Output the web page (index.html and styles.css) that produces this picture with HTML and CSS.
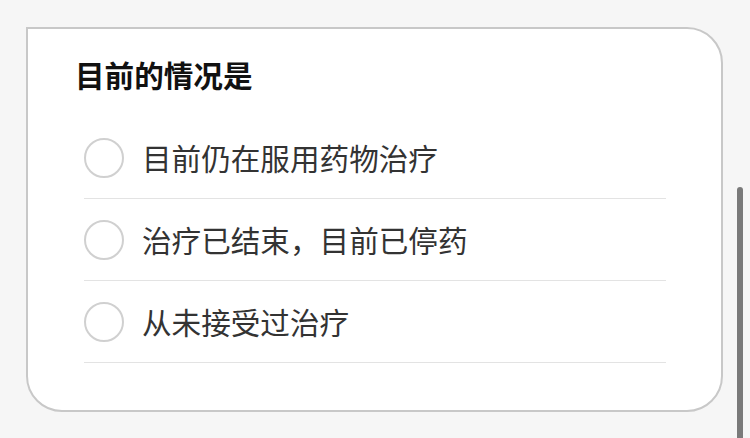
FILE: index.html
```html
<!DOCTYPE html>
<html lang="zh-CN">
<head>
<meta charset="utf-8">
<link rel="stylesheet" href="styles.css">
</head>
<body>
<div class="page">
  <section class="card">
    <h2 class="title">目前的情况是</h2>
    <ul class="options">
      <li class="option"><span class="radio"></span><span class="label">目前仍在服用药物治疗</span></li>
      <li class="option"><span class="radio"></span><span class="label">治疗已结束，目前已停药</span></li>
      <li class="option"><span class="radio"></span><span class="label">从未接受过治疗</span></li>
    </ul>
  </section>
  <div class="scrollbar"></div>
</div>
</body>
</html>
```
FILE: styles.css
```css
html, body {
  margin: 0;
  padding: 0;
}
body {
  background: #f6f6f6;
  font-family: "Noto Sans CJK SC", "Noto Sans", sans-serif;
  width: 750px;
  height: 438px;
  overflow: hidden;
}
.page {
  position: relative;
  width: 750px;
  height: 438px;
  padding: 27px 0 0 26px;
  box-sizing: border-box;
}
.card {
  width: 697px;
  height: 385px;
  box-sizing: border-box;
  background: #ffffff;
  border: 2px solid #c8c8c8;
  border-radius: 0 36px 36px 36px;
  padding: 31px 55px 0 47px;
}
.title {
  margin: 0 0 28px 0;
  font-size: 29.6px;
  line-height: 29px;
  font-weight: 700;
  color: #111111;
}
.options {
  list-style: none;
  margin: 0;
  padding: 0 0 0 9px;
}
.option {
  display: flex;
  align-items: center;
  height: 81px;
  border-bottom: 1.5px solid #e3e3e3;
}
.radio {
  width: 40px;
  height: 40px;
  box-sizing: border-box;
  border: 2px solid #d0d0d0;
  border-radius: 50%;
  flex: none;
  margin-right: 18px;
}
.label {
  font-size: 29.6px;
  line-height: 1;
  color: #333333;
}
.scrollbar {
  position: absolute;
  left: 737px;
  top: 187px;
  width: 6px;
  height: 260px;
  background: #7a7a7a;
  border-radius: 3px;
}
```
